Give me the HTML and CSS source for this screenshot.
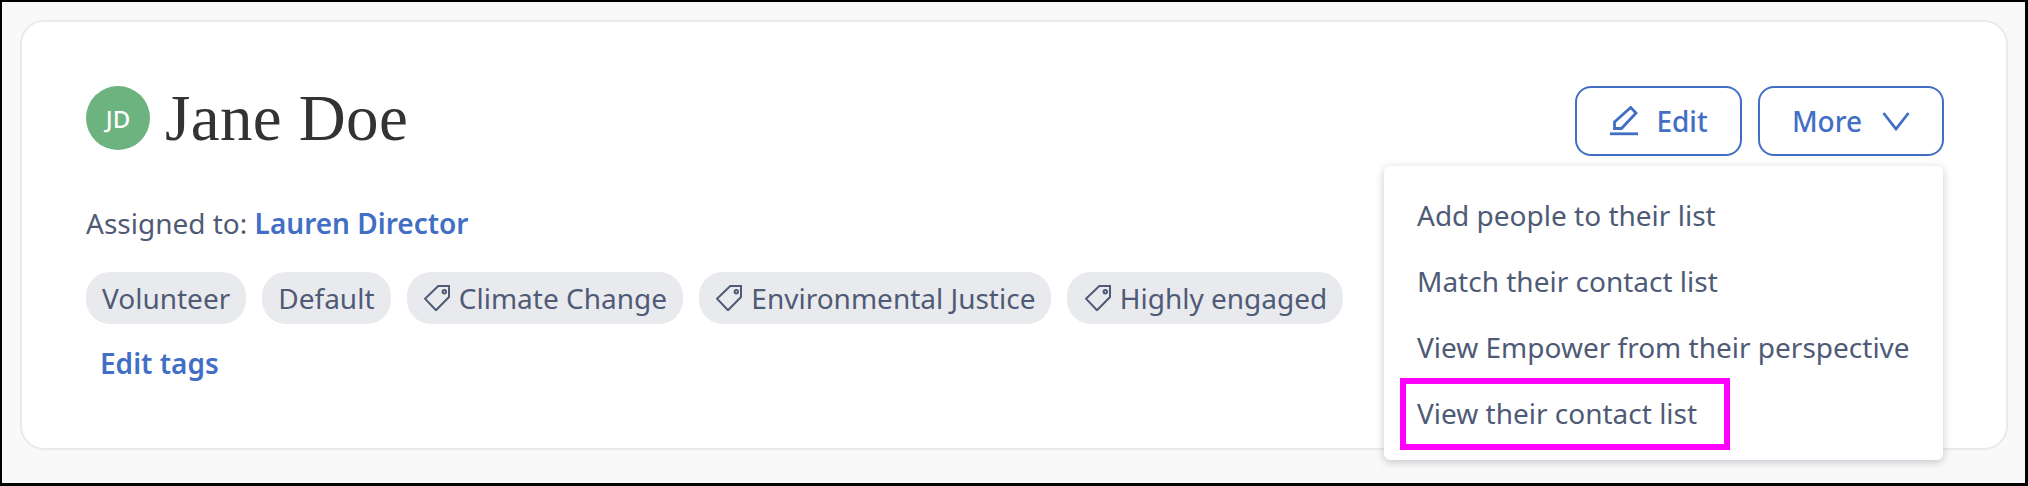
FILE: index.html
```html
<!DOCTYPE html>
<html lang="en">
<head>
<meta charset="UTF-8">
<meta name="viewport" content="width=device-width, initial-scale=1.0">
<title>Jane Doe</title>
<link rel="stylesheet" href="styles.css">
</head>
<body>
<div class="frame">
    <div class="card">
        <div class="card-left">
            <div class="person">
                <span class="avatar">JD</span>
                <h1 class="name">Jane Doe</h1>
            </div>
            <p class="assigned">Assigned to: <a class="link" href="#">Lauren Director</a></p>
            <div class="tags">
                <span class="tag">Volunteer</span>
                <span class="tag">Default</span>
                <span class="tag"><svg class="tag-icon" viewBox="0 0 26 26"><path d="M1 13.7 L14.3 1 H25 V12 L12 25.3 Z"/><circle cx="20.3" cy="6.7" r="1.7"/></svg>Climate Change</span>
                <span class="tag"><svg class="tag-icon" viewBox="0 0 26 26"><path d="M1 13.7 L14.3 1 H25 V12 L12 25.3 Z"/><circle cx="20.3" cy="6.7" r="1.7"/></svg>Environmental Justice</span>
                <span class="tag"><svg class="tag-icon" viewBox="0 0 26 26"><path d="M1 13.7 L14.3 1 H25 V12 L12 25.3 Z"/><circle cx="20.3" cy="6.7" r="1.7"/></svg>Highly engaged</span>
            </div>
            <a class="link edit-tags" href="#">Edit tags</a>
        </div>
        <div class="card-right">
            <div class="actions">
                <button class="btn btn-edit"><svg class="btn-icon" viewBox="0 0 30 30"><path d="M5.5 16 L21.7 1.5 L27 7 L12.5 22.5 H5.5 Z"/><path d="M1 27.8 H29"/></svg>Edit</button>
                <button class="btn btn-more">More<svg class="btn-icon chevron" viewBox="0 0 28 20"><path d="M1.5 2 L14 18 L26.5 2"/></svg></button>
            </div>
        </div>
    </div>
    <div class="menu">
        <a class="menu-item" href="#">Add people to their list</a>
        <a class="menu-item" href="#">Match their contact list</a>
        <a class="menu-item" href="#">View Empower from their perspective</a>
        <a class="menu-item" href="#"><span class="highlight">View their contact list</span></a>
    </div>
</div>
</body>
</html>
```

FILE: styles.css
```css
*, *::after {
    box-sizing: border-box;
}
html, body {
    margin: 0;
    padding: 0;
}
body {
    font-family: "Noto Sans", Arial, sans-serif;
    color: #4f5b76;
}
.frame {
    position: relative;
    width: 2028px;
    height: 486px;
    padding: 18px 17px 33px 18px;
    background-color: #f9f9f9;
    border: 3px solid #000;
    border-width: 2px 3px 3px 2px;
}
.card {
    display: flex;
    justify-content: space-between;
    height: 430px;
    padding: 64px 62px 0 64px;
    background-color: #fff;
    border: 2px solid #e9eaee;
    border-radius: 24px;
}
.person {
    display: flex;
    align-items: center;
    gap: 15px;
}
.avatar {
    display: flex;
    align-items: center;
    justify-content: center;
    width: 64px;
    height: 64px;
    border-radius: 50%;
    background-color: #6cb37f;
    color: #fff;
    font-size: 24px;
    font-weight: 500;
}
.name {
    margin: 0;
    font-family: "Liberation Serif", serif;
    font-size: 65px;
    font-weight: 400;
    letter-spacing: 0.4px;
    line-height: 64px;
    color: #333;
}
.assigned {
    margin: 53px 0 0;
    font-size: 28px;
    line-height: 40px;
}
.link {
    color: #426fc5;
    font-weight: 600;
    text-decoration: none;
}
.tags {
    display: flex;
    gap: 16px;
    margin-top: 29px;
}
.tag {
    display: flex;
    align-items: center;
    height: 52px;
    padding: 0 16px;
    border-radius: 24px;
    background-color: #e9eaee;
    font-size: 28px;
    white-space: nowrap;
}
.tag-icon {
    width: 26px;
    height: 26px;
    margin: 0 9px 0 1.3px;
    fill: none;
    stroke: #4f5b76;
    stroke-width: 2;
}
.edit-tags {
    display: block;
    margin: 19px 0 0 14px;
    font-size: 28px;
    line-height: 40px;
}
.actions {
    display: flex;
    gap: 16px;
}
.btn {
    display: flex;
    align-items: center;
    justify-content: center;
    height: 70px;
    background-color: #fff;
    border: 2px solid #426fc5;
    border-radius: 16px;
    color: #426fc5;
    font-family: inherit;
    font-size: 28px;
    font-weight: 500;
    cursor: pointer;
}
.btn-edit {
    width: 167px;
}
.btn-more {
    width: 186px;
}
.btn-icon {
    fill: none;
    stroke: #426fc5;
    stroke-width: 2.8;
}
.btn-edit .btn-icon {
    width: 30px;
    height: 30px;
    margin-right: 17px;
}
.chevron {
    width: 28px;
    height: 20px;
    margin-left: 20px;
}
.menu {
    position: absolute;
    top: 164px;
    left: 1382px;
    width: 559px;
    height: 294px;
    padding: 16px 0 14px;
    background-color: #fff;
    border-radius: 6px;
    box-shadow: 0 2px 8px rgba(60, 65, 90, 0.28);
}
.menu-item {
    display: flex;
    align-items: center;
    height: 66px;
    padding-left: 33px;
    color: #4f5b76;
    font-size: 28px;
    text-decoration: none;
}
.highlight {
    position: relative;
}
.highlight::after {
    content: "";
    position: absolute;
    top: -16px;
    left: -17px;
    width: 330px;
    height: 72px;
    border: 6px solid #ff00ff;
}
```
